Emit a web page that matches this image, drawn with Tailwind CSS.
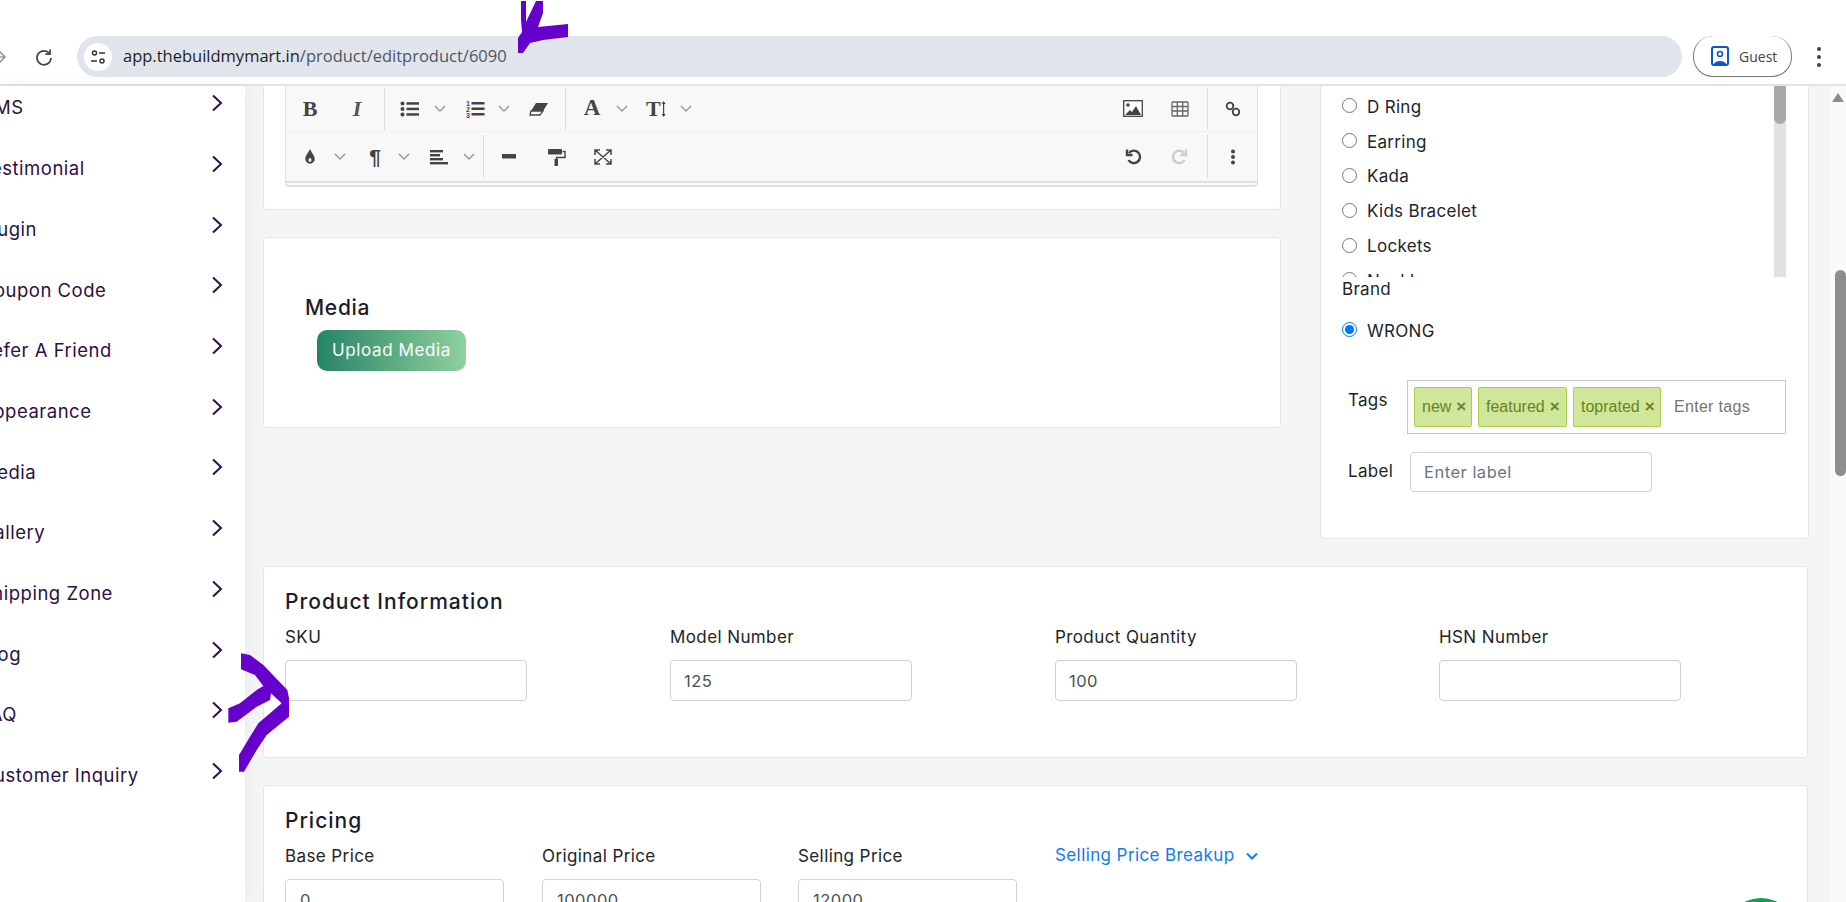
<!DOCTYPE html>
<html lang="en">
<head>
<meta charset="UTF-8" />
<title>Edit Product</title>
<script src="https://cdn.jsdelivr.net/npm/@tailwindcss/browser@4"></script>
</head>
<body class="h-[902px] w-[1846px] overflow-hidden bg-white font-['Inter',sans-serif] text-[#212529]">
  <!-- browser bar -->
  <header class="h-[86px] border-b-2 border-[#e3e3e3] bg-white pt-[36px] flex items-start font-['Open_Sans',sans-serif]">
    <svg class="ml-[-9px] mt-[13px] w-[16px] h-[16px] shrink-0" viewBox="0 0 16 16" fill="none" stroke="#9a9a9a" stroke-width="1.6"><path d="M1 8h13M8 2l6 6-6 6"/></svg>
    <svg class="ml-[27px] mt-[11px] w-[20px] h-[20px] shrink-0" viewBox="0 0 20 20" fill="none" stroke="#444" stroke-width="1.7"><path d="M15.5 6.500A7 7 0 1 0 17 11"/><path d="M16 2.500v4.600h-4.600" /></svg>
    <div class="ml-[23px] w-[1605px] h-[41px] rounded-full bg-[#e0e5ec] flex items-center pl-[7px] shrink-0">
      <div class="w-[28px] h-[28px] rounded-full bg-white flex items-center justify-center">
        <svg class="w-[16px] h-[16px]" viewBox="0 0 16 16" fill="none" stroke="#333" stroke-width="1.5"><circle cx="4.500" cy="4" r="2"/><path d="M9 4h6M1 12h6"/><circle cx="12" cy="12" r="2"/></svg>
      </div>
      <span class="ml-[11px] text-[16.5px] text-[#1f1f1f]">app.thebuildmymart.in<span class="text-[#50555c]">/product/editproduct/6090</span></span>
    </div>
    <div class="ml-[11px] w-[99px] h-[41px] rounded-[20px] border border-t-0 border-[#777] flex items-center pl-[17px] shrink-0">
      <svg class="w-[18px] h-[20px]" viewBox="0 0 18 20" fill="none"><rect x="1" y="1" width="16" height="18" rx="2" stroke="#0b57d0" stroke-width="2"/><circle cx="9" cy="8" r="2.500" stroke="#0b57d0" stroke-width="1.6"/><path d="M3 18c1-4 11-4 12 0z" fill="#0b57d0"/></svg>
      <span class="ml-[10px] text-[14px] text-[#444]">Guest</span>
    </div>
    <div class="ml-[25px] mt-[11px] flex flex-col gap-[4px]">
      <i class="block w-[4px] h-[4px] rounded-full bg-[#444]"></i><i class="block w-[4px] h-[4px] rounded-full bg-[#444]"></i><i class="block w-[4px] h-[4px] rounded-full bg-[#444]"></i>
    </div>
  </header>

  <div class="flex h-[816px] relative">
    <!-- sidebar -->
    <aside class="w-[245px] shrink-0 bg-white overflow-hidden relative z-10 shadow-[0_0_18px_rgba(0,0,0,0.06)] text-[#2b1147] text-[18.5px] tracking-[0.5px]">
      <ul class="mt-[-8px]">
        <li class="h-[60.7px] flex items-center justify-between pr-[22px] ml-[-20px]"><span>CMS</span><svg class="w-[12px] h-[18px] -translate-y-[5px]" viewBox="0 0 12 18" fill="none" stroke="#2b1147" stroke-width="2"><path d="M2 1.500l8 7.500-8 7.500"/></svg></li>
        <li class="h-[60.7px] flex items-center justify-between pr-[22px] ml-[-20px]"><span>Testimonial</span><svg class="w-[12px] h-[18px] -translate-y-[5px]" viewBox="0 0 12 18" fill="none" stroke="#2b1147" stroke-width="2"><path d="M2 1.500l8 7.500-8 7.500"/></svg></li>
        <li class="h-[60.7px] flex items-center justify-between pr-[22px] ml-[-20px]"><span>Plugin</span><svg class="w-[12px] h-[18px] -translate-y-[5px]" viewBox="0 0 12 18" fill="none" stroke="#2b1147" stroke-width="2"><path d="M2 1.500l8 7.500-8 7.500"/></svg></li>
        <li class="h-[60.7px] flex items-center justify-between pr-[22px] ml-[-20px]"><span>Coupon Code</span><svg class="w-[12px] h-[18px] -translate-y-[5px]" viewBox="0 0 12 18" fill="none" stroke="#2b1147" stroke-width="2"><path d="M2 1.500l8 7.500-8 7.500"/></svg></li>
        <li class="h-[60.7px] flex items-center justify-between pr-[22px] ml-[-20px]"><span>Refer A Friend</span><svg class="w-[12px] h-[18px] -translate-y-[5px]" viewBox="0 0 12 18" fill="none" stroke="#2b1147" stroke-width="2"><path d="M2 1.500l8 7.500-8 7.500"/></svg></li>
        <li class="h-[60.7px] flex items-center justify-between pr-[22px] ml-[-20px]"><span>Appearance</span><svg class="w-[12px] h-[18px] -translate-y-[5px]" viewBox="0 0 12 18" fill="none" stroke="#2b1147" stroke-width="2"><path d="M2 1.500l8 7.500-8 7.500"/></svg></li>
        <li class="h-[60.7px] flex items-center justify-between pr-[22px] ml-[-20px]"><span>Media</span><svg class="w-[12px] h-[18px] -translate-y-[5px]" viewBox="0 0 12 18" fill="none" stroke="#2b1147" stroke-width="2"><path d="M2 1.500l8 7.500-8 7.500"/></svg></li>
        <li class="h-[60.7px] flex items-center justify-between pr-[22px] ml-[-20px]"><span>Gallery</span><svg class="w-[12px] h-[18px] -translate-y-[5px]" viewBox="0 0 12 18" fill="none" stroke="#2b1147" stroke-width="2"><path d="M2 1.500l8 7.500-8 7.500"/></svg></li>
        <li class="h-[60.7px] flex items-center justify-between pr-[22px] ml-[-20px]"><span>Shipping Zone</span><svg class="w-[12px] h-[18px] -translate-y-[5px]" viewBox="0 0 12 18" fill="none" stroke="#2b1147" stroke-width="2"><path d="M2 1.500l8 7.500-8 7.500"/></svg></li>
        <li class="h-[60.7px] flex items-center justify-between pr-[22px] ml-[-20px]"><span>Blog</span><svg class="w-[12px] h-[18px] -translate-y-[5px]" viewBox="0 0 12 18" fill="none" stroke="#2b1147" stroke-width="2"><path d="M2 1.500l8 7.500-8 7.500"/></svg></li>
        <li class="h-[60.7px] flex items-center justify-between pr-[22px] ml-[-20px]"><span>FAQ</span><svg class="w-[12px] h-[18px] -translate-y-[5px]" viewBox="0 0 12 18" fill="none" stroke="#2b1147" stroke-width="2"><path d="M2 1.500l8 7.500-8 7.500"/></svg></li>
        <li class="h-[60.7px] flex items-center justify-between pr-[22px] ml-[-20px]"><span>Customer Inquiry</span><svg class="w-[12px] h-[18px] -translate-y-[5px]" viewBox="0 0 12 18" fill="none" stroke="#2b1147" stroke-width="2"><path d="M2 1.500l8 7.500-8 7.500"/></svg></li>
      </ul>
    </aside>

    <!-- main -->
    <main class="w-[1584px] shrink-0 bg-[#f3f5f6] pl-[18px] overflow-hidden">
      <div class="flex gap-[39px] items-start">
        <div class="w-[1018px] shrink-0">
          <!-- editor card -->
          <section class="h-[124px] bg-white border border-t-0 border-[#e4e7e8] rounded-b-[4px] pl-[21px] pr-[22px]">
            <div class="h-[101px] border-x border-b-2 border-x-[#e2e2e2] border-b-[#e0e0e0] rounded-b-[4px] bg-[#f8f8f8] text-[#444]">
              <div class="h-[46px] flex items-center border-b border-[#efefef]">
                <span class="ml-[14px] w-[20px] text-center text-[22px] font-bold font-['Liberation_Serif',serif]">B</span>
                <span class="ml-[27px] w-[20px] text-center text-[22px] italic font-bold font-['Liberation_Serif',serif] text-[#555]">I</span>
                <i class="ml-[17px] block w-px h-[42px] bg-[#dcdcdc]"></i>
                <svg class="ml-[15px] w-[20px] h-[16px]" viewBox="0 0 20 16" fill="#444"><circle cx="2.500" cy="2.500" r="2"/><circle cx="2.500" cy="8" r="2"/><circle cx="2.500" cy="13.500" r="2"/><rect x="6.500" y="1.200" width="12.500" height="2.500"/><rect x="6.500" y="6.700" width="12.500" height="2.500"/><rect x="6.500" y="12.200" width="12.500" height="2.500"/></svg>
                <svg class="ml-[14px] w-[12px] h-[8px]" viewBox="0 0 12 8" fill="none" stroke="#999" stroke-width="1.500"><path d="M1 1l5 5 5-5"/></svg>
                <svg class="ml-[19px] w-[20px] h-[20px]" viewBox="0 0 20 20" fill="#444"><text x="1" y="7" font-size="7" font-family="Liberation Sans" font-weight="bold">1</text><text x="1" y="13" font-size="7" font-family="Liberation Sans" font-weight="bold">2</text><text x="1" y="19" font-size="7" font-family="Liberation Sans" font-weight="bold">3</text><rect x="6.500" y="3" width="13" height="2.500"/><rect x="6.500" y="8.500" width="13" height="2.500"/><rect x="6.500" y="14" width="13" height="2.500"/></svg>
                <svg class="ml-[13px] w-[12px] h-[8px]" viewBox="0 0 12 8" fill="none" stroke="#999" stroke-width="1.500"><path d="M1 1l5 5 5-5"/></svg>
                <svg class="ml-[19px] w-[20px] h-[14px]" viewBox="0 0 20 14"><path d="M7 1h12l-5 8H2z" fill="#444"/><path d="M2 9h12l-3 4H1z" fill="#fff" stroke="#444" stroke-width="1.300"/></svg>
                <i class="ml-[16px] block w-px h-[42px] bg-[#dcdcdc]"></i>
                <span class="ml-[16px] w-[20px] text-center text-[23px] font-bold font-['Liberation_Serif',serif]">A</span>
                <svg class="ml-[14px] w-[12px] h-[8px]" viewBox="0 0 12 8" fill="none" stroke="#999" stroke-width="1.500"><path d="M1 1l5 5 5-5"/></svg>
                <span class="ml-[18px] w-[20px] flex items-center text-[22px] font-bold font-['Liberation_Serif',serif]">T<svg class="w-[5px] h-[16px]" viewBox="0 0 5 16" fill="#444"><rect x="2" y="1" width="1.200" height="14"/><path d="M2.600 0l2 3H.6zM2.600 16l2-3H.6z"/></svg></span>
                <svg class="ml-[14px] w-[12px] h-[8px]" viewBox="0 0 12 8" fill="none" stroke="#999" stroke-width="1.500"><path d="M1 1l5 5 5-5"/></svg>
                <div class="flex-1"></div>
                <svg class="w-[20px] h-[17px]" viewBox="0 0 20 17"><rect x=".7" y=".7" width="18.600" height="15.600" fill="#fff" stroke="#444" stroke-width="1.300"/><circle cx="5" cy="5" r="1.800" fill="#444"/><path d="M2 15l5-5 2 2 4-6 5 9z" fill="#444"/></svg>
                <svg class="ml-[27px] w-[20px] h-[16px]" viewBox="0 0 20 16" fill="none" stroke="#666" stroke-width="1.300"><rect x="2" y="1" width="16" height="14" rx="1"/><path d="M2 5.500h16M2 10h16M7.300 1v14M12.700 1v14"/></svg>
                <i class="ml-[17px] block w-px h-[42px] bg-[#dcdcdc]"></i>
                <svg class="ml-[15px] w-[20px] h-[18px]" viewBox="0 0 20 18" fill="none" stroke="#444" stroke-width="1.800"><circle cx="7" cy="6" r="3.300"/><circle cx="13" cy="12" r="3.300"/></svg>
                <div class="w-[14px]"></div>
              </div>
              <div class="h-[51px] flex items-center border-b-2 border-[#e0e0e0]">
                <svg class="ml-[14px] w-[20px] h-[18px]" viewBox="0 0 20 18" fill="#444"><path d="M10 1c2 4.500 4.700 6.500 4.700 10a4.700 4.700 0 0 1-9.400 0c0-3.500 2.700-5.500 4.700-10z"/><ellipse cx="10" cy="12" rx="1.500" ry="2" fill="#f8f8f8"/></svg>
                <svg class="ml-[14px] w-[12px] h-[8px]" viewBox="0 0 12 8" fill="none" stroke="#999" stroke-width="1.500"><path d="M1 1l5 5 5-5"/></svg>
                <span class="ml-[19px] w-[20px] text-center text-[21px] font-bold font-['Liberation_Sans',sans-serif]">¶</span>
                <svg class="ml-[13px] w-[12px] h-[8px]" viewBox="0 0 12 8" fill="none" stroke="#999" stroke-width="1.500"><path d="M1 1l5 5 5-5"/></svg>
                <svg class="ml-[19px] w-[20px] h-[16px]" viewBox="0 0 20 16" fill="#444"><rect x="1" y="1" width="13" height="2.400"/><rect x="1" y="5" width="10" height="2.400"/><rect x="1" y="9" width="13" height="2.400"/><rect x="1" y="13" width="18" height="2.400"/></svg>
                <svg class="ml-[14px] w-[12px] h-[8px]" viewBox="0 0 12 8" fill="none" stroke="#999" stroke-width="1.500"><path d="M1 1l5 5 5-5"/></svg>
                <i class="ml-[8px] block w-px h-[43px] bg-[#dcdcdc]"></i>
                <svg class="ml-[15px] w-[20px] h-[6px]" viewBox="0 0 20 6" fill="#444"><rect x="3" y="0" width="14" height="4.500"/></svg>
                <svg class="ml-[27px] w-[20px] h-[18px]" viewBox="0 0 20 18" fill="#444"><rect x="2" y="1" width="14" height="5.500" rx="1"/><path d="M16.500 3.500H19v6h-8.500v2" fill="none" stroke="#444" stroke-width="1.400"/><rect x="8.500" y="11" width="3.500" height="7"/></svg>
                <svg class="ml-[27px] w-[20px] h-[18px]" viewBox="0 0 20 18" fill="none" stroke="#444" stroke-width="1.500"><path d="M2 2l16 14M18 2L2 16M2 7V2h5M13 2h5v5M18 11v5h-5M7 16H2v-5"/></svg>
                <div class="flex-1"></div>
                <svg class="w-[20px] h-[18px]" viewBox="0 0 20 18" fill="none" stroke="#444" stroke-width="2.400"><path d="M6 5a6.200 6.200 0 1 1-.5 7"/><path d="M4 1.500V7h5.500"/></svg>
                <svg class="ml-[27px] w-[20px] h-[18px]" viewBox="0 0 20 18" fill="none" stroke="#ccc" stroke-width="2.400"><path d="M14 5a6.200 6.200 0 1 0 .5 7"/><path d="M16 1.500V7h-5.500"/></svg>
                <i class="ml-[17px] block w-px h-[43px] bg-[#dcdcdc]"></i>
                <svg class="ml-[15px] w-[20px] h-[16px]" viewBox="0 0 20 16" fill="#444"><circle cx="10" cy="2.500" r="2"/><circle cx="10" cy="8" r="2"/><circle cx="10" cy="13.500" r="2"/></svg>
                <div class="w-[14px]"></div>
              </div>
            </div>
          </section>
          <!-- media card -->
          <section class="mt-[27px] h-[191px] bg-white border border-[#e4e7e8] rounded-[4px] pl-[41px] pt-[56px]">
            <h3 class="text-[21px] font-medium leading-[28px] text-[#1b1b2b] tracking-[0.7px]">Media</h3>
            <button class="ml-[12px] mt-[8px] w-[149px] h-[41px] rounded-[10px] bg-linear-to-r from-[#218465] to-[#8ed19f] text-white text-[17px] tracking-[0.6px]">Upload Media</button>
          </section>
        </div>

        <!-- attributes card -->
        <section class="w-[489px] h-[453px] shrink-0 bg-white border border-t-0 border-[#e4e7e8] rounded-b-[4px] pl-[21px] text-[17px] tracking-[0.3px]">
          <div class="relative h-[191px] overflow-hidden">
            <div class="absolute right-[22px] top-0 w-[12px] h-[191px] bg-[#e2e2e2]"><div class="h-[38px] rounded-b-[6px] bg-[#a8a8a8]"></div></div>
            <div class="pt-[4px]">
              <label class="h-[34.9px] flex items-center gap-[10px]"><input type="radio" name="cat" class="w-[15px] h-[15px] -translate-y-[2px] m-0" />D Ring</label>
              <label class="h-[34.9px] flex items-center gap-[10px]"><input type="radio" name="cat" class="w-[15px] h-[15px] -translate-y-[2px] m-0" />Earring</label>
              <label class="h-[34.9px] flex items-center gap-[10px]"><input type="radio" name="cat" class="w-[15px] h-[15px] -translate-y-[2px] m-0" />Kada</label>
              <label class="h-[34.9px] flex items-center gap-[10px]"><input type="radio" name="cat" class="w-[15px] h-[15px] -translate-y-[2px] m-0" />Kids Bracelet</label>
              <label class="h-[34.9px] flex items-center gap-[10px]"><input type="radio" name="cat" class="w-[15px] h-[15px] -translate-y-[2px] m-0" />Lockets</label>
              <label class="h-[34.9px] flex items-center gap-[10px]"><input type="radio" name="cat" class="w-[15px] h-[15px] -translate-y-[2px] m-0" />Necklace</label>
            </div>
          </div>
          <div class="leading-[24px]">Brand</div>
          <label class="mt-[18px] flex items-center gap-[10px] h-[26px]"><input type="radio" checked name="brand" class="w-[15px] h-[15px] -translate-y-[3px] m-0" />WRONG</label>
          <div class="mt-[35px] flex items-start pl-[6px]">
            <span class="w-[59px] leading-[40px] shrink-0">Tags</span>
            <div class="w-[379px] h-[54px] border border-[#c8c8c8] flex items-center pl-[6px] gap-[6px] font-['Liberation_Sans',sans-serif] text-[16px] tracking-normal">
              <span class="w-[58px] h-[40px] pl-[7px] flex items-center gap-[5px] rounded-[2px] bg-[#d0e69a] border border-[#a8d04d] text-[#66851f]">new <b class="text-[17px]">×</b></span>
              <span class="w-[89px] h-[40px] pl-[7px] flex items-center gap-[5px] rounded-[2px] bg-[#d0e69a] border border-[#a8d04d] text-[#66851f]">featured <b class="text-[17px]">×</b></span>
              <span class="w-[88px] h-[40px] pl-[7px] flex items-center gap-[5px] rounded-[2px] bg-[#d0e69a] border border-[#a8d04d] text-[#66851f]">toprated <b class="text-[17px]">×</b></span>
              <span class="ml-[7px] text-[#757575] tracking-[0.3px]">Enter tags</span>
            </div>
          </div>
          <div class="mt-[18px] flex items-start pl-[6px]">
            <span class="w-[62px] leading-[38px] shrink-0">Label</span>
            <input placeholder="Enter label" class="w-[242px] h-[40px] border border-[#ced4da] rounded-[4px] px-[13px] text-[16.5px] tracking-[0.5px] placeholder:text-[#6c757d] bg-white" />
          </div>
        </section>
      </div>

      <!-- product information -->
      <section class="mt-[27px] w-[1545px] h-[192px] bg-white border border-[#e4e7e8] rounded-[4px] pl-[21px] pt-[21px]">
        <h3 class="text-[21px] font-medium leading-[28px] text-[#1b1b2b] tracking-[1px]">Product Information</h3>
        <div class="mt-[9px] grid grid-cols-[385px_385px_384px_242px]">
          <div><label class="block text-[17px] tracking-[0.4px] leading-[24px]">SKU</label><input class="mt-[11px] block w-[242px] h-[41px] border border-[#ced4da] rounded-[4px] px-[13px] text-[16.5px] tracking-[0.5px] bg-white" /></div>
          <div><label class="block text-[17px] tracking-[0.4px] leading-[24px]">Model Number</label><input value="125" class="mt-[11px] block w-[242px] h-[41px] border border-[#ced4da] rounded-[4px] px-[13px] text-[16.5px] tracking-[0.5px] text-[#495057] bg-white" /></div>
          <div><label class="block text-[17px] tracking-[0.4px] leading-[24px]">Product Quantity</label><input value="100" class="mt-[11px] block w-[242px] h-[41px] border border-[#ced4da] rounded-[4px] px-[13px] text-[16.5px] tracking-[0.5px] text-[#495057] bg-white" /></div>
          <div><label class="block text-[17px] tracking-[0.4px] leading-[24px]">HSN Number</label><input class="mt-[11px] block w-[242px] h-[41px] border border-[#ced4da] rounded-[4px] px-[13px] text-[16.5px] tracking-[0.5px] bg-white" /></div>
        </div>
      </section>

      <!-- pricing -->
      <section class="mt-[27px] w-[1545px] h-[200px] bg-white border border-[#e4e7e8] rounded-[4px] pl-[21px] pt-[21px]">
        <h3 class="text-[21px] font-medium leading-[28px] text-[#1b1b2b] tracking-[1px]">Pricing</h3>
        <div class="mt-[9px] flex">
          <div class="w-[257px]"><label class="block text-[17px] tracking-[0.4px] leading-[24px]">Base Price</label><input value="0" class="mt-[11px] block w-[219px] h-[41px] border border-[#ced4da] rounded-[4px] px-[14px] text-[16.5px] tracking-[0.5px] text-[#495057] bg-white" /></div>
          <div class="w-[256px]"><label class="block text-[17px] tracking-[0.4px] leading-[24px]">Original Price</label><input value="100000" class="mt-[11px] block w-[219px] h-[41px] border border-[#ced4da] rounded-[4px] px-[14px] text-[16.5px] tracking-[0.5px] text-[#495057] bg-white" /></div>
          <div class="w-[257px]"><label class="block text-[17px] tracking-[0.4px] leading-[24px]">Selling Price</label><input value="12000" class="mt-[11px] block w-[219px] h-[41px] border border-[#ced4da] rounded-[4px] px-[14px] text-[16.5px] tracking-[0.5px] text-[#495057] bg-white" /></div>
          <div class="flex items-center h-[24px] gap-[10px] text-[17px] tracking-[0.4px] text-[#0d7cf2]">Selling Price Breakup <svg class="w-[14px] h-[9px]" viewBox="0 0 14 9" fill="none" stroke="#0d7cf2" stroke-width="2"><path d="M2 1.500l5 5 5-5"/></svg></div>
        </div>
      </section>
    </main>

    <!-- page scrollbar -->
    <div class="w-[17px] shrink-0 bg-[#fafafa] relative">
      <svg class="absolute left-[3px] top-[7px] w-[12px] h-[9px]" viewBox="0 0 12 9" fill="#8c8c8c"><path d="M6 0l6 9H0z"/></svg>
      <div class="absolute left-[6px] right-0 top-[184px] h-[206px] rounded-[6px] bg-[#8e8e8e]"></div>
    </div>

    <!-- chat bubble -->
    <div class="absolute left-[1725px] top-[812px] w-[72px] h-[72px] rounded-full bg-[#12a150]"></div>
  </div>

  <!-- hand-drawn annotation arrows -->
  <svg class="absolute left-0 top-0 pointer-events-none z-20" width="1846" height="902" fill="#6600cc">
    <path d="M521 1H526V22L536 1H543V13L538 27L568 24V37L543 40L530 43L523 53H518V38L522 32L521 20Z"/>
    <path transform="translate(200 620) scale(.33333)" d="M123 100L150 105L190 135L262 210L267 235V290L200 345L170 390L132 455H117V405L150 350L175 310L245 250L213 220L210 240L170 260L110 305L85 308V265L120 250L170 210L190 198L165 165L123 148Z"/>
  </svg>
</body>
</html>
